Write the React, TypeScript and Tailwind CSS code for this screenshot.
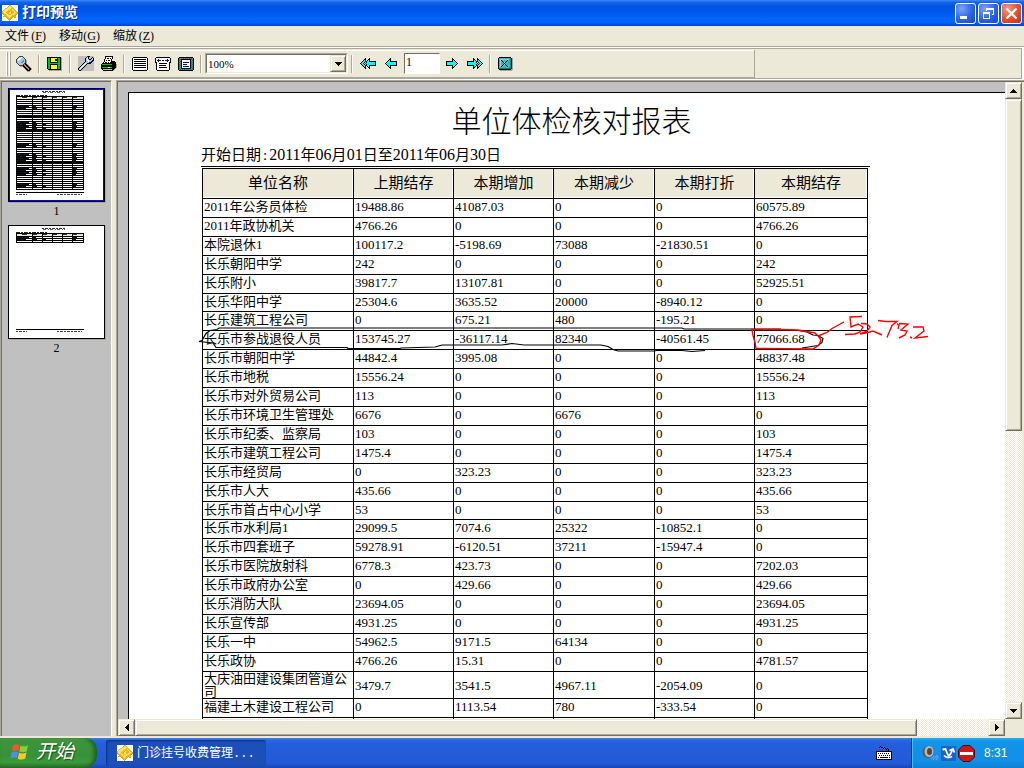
import type { ReactNode } from "react";

const PALETTE: Record<string, string> = {
  K: "#000000",
  C: "#00ffff",
  W: "#ffffff",
  G: "#808080",
  L: "#c0c0c0",
  D: "#404040",
  B: "#0000c0",
  S: "#a8c8e8",
  N: "#00c800",
  Y: "#ffff00",
  T: "#008080",
  A: "#20c0c0",
  R: "#c07848",
  O: "#f0b818",
  P: "#fce468",
  Q: "#d8a020",
  E: "#a8a494",
};

const mirror = (rows: string[]) => rows.map((r) => r.split("").reverse().join(""));

function Bitmap({ rows }: { rows: string[] }) {
  const width = Math.max(...rows.map((r) => r.length));
  const cells: ReactNode[] = [];
  rows.forEach((row, y) => {
    let x = 0;
    while (x < row.length) {
      const c = row[x];
      let n = 1;
      while (row[x + n] === c) n++;
      if (PALETTE[c]) {
        cells.push(<rect key={`${x}-${y}`} x={x} y={y} width={n} height={1} fill={PALETTE[c]} />);
      }
      x += n;
    }
  });
  return (
    <svg width={width} height={rows.length} viewBox={`0 0 ${width} ${rows.length}`} shapeRendering="crispEdges" aria-hidden="true" className="shrink-0">
      {cells}
    </svg>
  );
}

const PREV = [
  ".....K......",
  "....KK......",
  "...KCK......",
  "..KCCKKKKKKK",
  ".KCCCCCCCCCK",
  "KCCCCCCCCCCK",
  ".KCCCCCCCCCK",
  "..KCCKKKKKKK",
  "...KCK......",
  "....KK......",
  ".....K......",
];
const FIRST = [
  ".....K...K......",
  "....KK..KK......",
  "...KCK.KCK......",
  "..KCCKKCCKKKKKKK",
  ".KCCKCKCCCCCCCCK",
  "KCCKCKCCCCCCCCCK",
  ".KCCKCKCCCCCCCCK",
  "..KCCKKCCKKKKKKK",
  "...KCK.KCK......",
  "....KK..KK......",
  ".....K...K......",
];
const FIND = [
  "...DDDD.........",
  "..DSSWSD........",
  ".DSWWSSSD.......",
  "DSWWSSSSSD......",
  "DSWSSSSGSDE.....",
  "DSSSSSGGSDE.....",
  "DSSSSGGSSDE.....",
  ".DSSSSSSDKE.....",
  "..DSSSSDRKKE....",
  "...DDDDKRRKKE...",
  "....EEEKKRRKKE..",
  ".......EKKRRKKE.",
  "........EKKRRKKE",
  ".........EKKRKKE",
  "..........EKKKE.",
  "...........EEE..",
];
const SAVE = [
  "KKKKKKKKKKKKKK.",
  "KNNKYYYYYYKNNKE",
  "KNNKYYYYKKKNNKE",
  "KNNKYYYYKKKNNKE",
  "KNNKYYYYYYKNNKE",
  "KNNKKKKKKKKNNKE",
  "KNNNNNNNNNNNNKE",
  "KNNKKKKKKKKNNKE",
  "KNNKYYYYYYKNNKE",
  "KNNKYYYYYYKNNKE",
  "KNNKYYYYYYKNNKE",
  "KNNKYYYYYYKNNKE",
  ".KKKKKKKKKKKKKE",
  "..EEEEEEEEEEEEE",
];
const WRENCH = [
  "LLLLLLLLLDKKLLLL",
  "LLLLLLLLDSKLLLKL",
  "LLLLLLLKSWKLLKSK",
  "LLLLLLLKSWSKKSSK",
  "LLLLLLLKSWWSSSBK",
  "LLLLLLLKSSWSSBKL",
  "LLLLLLKSSSSBBKLL",
  "LLLLLKSWSKKKKLLL",
  "LLLLKSWSKELLLLLL",
  "LLLKSWSKELLLLLLL",
  "LLKSWSKELLLLLLLL",
  "LKSWSKELLLLLLLLL",
  "KSWSKELLLLLLLLLL",
  "KSSKELLLLLLLLLLL",
  "LKKELLLLLLLLLLLL",
];
const PRINTER = [
  "....KKKKKKKK....",
  "....KWWWWWWK....",
  "....KWKKWKWK....",
  "...KWWWWWWK.....",
  "...KWKWKKWK.....",
  "...KWWWWWWKKKK..",
  "..KWKKWKWKKKKKK.",
  ".KKKKKKKKKKKKKK.",
  "KNNNNNNNNNNKKKKE",
  "KKKKKKKKKKKKKKKE",
  "KKKKKKKKKKKKKKKE",
  "KNNNNNNYYNNKKKKE",
  "KKKKKKKKKKKKKKE.",
  ".KLLLLLLLLLKKE..",
  "..KKKKKKKKKKE...",
];
const LINES = [
  ".KKKKKKKKKKKKKK.",
  "KWWWWWWWWWWWWWWK",
  "KWKKKKKKKKKKKKWK",
  "KWWWWWWWWWWWWWWK",
  "KWKKKKKKKKKKKKWK",
  "KWWWWWWWWWWWWWWK",
  "KWKKKKKKKKKKKKWK",
  "KWWWWWWWWWWWWWWK",
  "KWKKKKKKKKKKKKWK",
  "KWWWWWWWWWWWWWWK",
  "KWKKKKKKKKKKKKWK",
  "KWWWWWWWWWWWWWWK",
  "KWWWWWWWWWWWWWWK",
  ".KKKKKKKKKKKKKK.",
];
const FITWIDTH = [
  ".KKKKKKKKKKKKKK.",
  "KWWWWWWWWWWWWWWK",
  "KWWBWWWWWWWWBWWK",
  "KWBBBBWKKWBBBBWK",
  "KWWBWWWWWWWWBWWK",
  "KKWWWWWWWWWWWWKK",
  ".KWWKKKKKKKKWWK.",
  ".KWWWWWWWWWWWWK.",
  ".KWWKKKKKKKWWWK.",
  ".KWWWWWWWWWWWWK.",
  ".KWWKKKKKKKKWWK.",
  ".KWWWWWWWWWWWWK.",
  ".KWWWWWWWWWWWWK.",
  "..KKKKKKKKKKKK..",
];
const FITPAGE = [
  ".KKKKKKKKKKKKKK.",
  "KTGTGTGTGTGTGTGK",
  "KGTKKKKKKKKKKTGK",
  "KTGKWWWWWWWWKGTK",
  "KGTKWWWWWWWWKTGK",
  "KTGKWBBBBBBWKGTK",
  "KGTKWWWWWWWWKTGK",
  "KTGKWBBBBWWWKGTK",
  "KGTKWWWWWWWWKTGK",
  "KTGKWBBBBBBWKGTK",
  "KGTKWWWWWWWWKTGK",
  "KTGKKKKKKKKKKGTK",
  "KGTGTGTGTGTGTGTK",
  ".KKKKKKKKKKKKKK.",
];
const CLOSE = [
  ".KKKKKKKKKKKK..",
  "KAAAAAAAAAAATKE",
  "KASSSSSSSSSATKE",
  "KASKAAAAAKAATKE",
  "KASAKAAAKAAATKE",
  "KASAAKSKAAAATKE",
  "KASAAAKAAAAATKE",
  "KASAAKSKAAAATKE",
  "KASAKAAAKAAATKE",
  "KASKAAAAAKAATKE",
  "KAAAAAAAAAAATKE",
  "KTTTTTTTTTTTTKE",
  ".KKKKKKKKKKKKEE",
  "..EEEEEEEEEEEE.",
];
const APP = [
  "WWWWWWWQOWWWWWWW",
  "WWWWWWQPPOWWWWWW",
  "WWWWWOPPPPOWWWWW",
  "WWWOOPPPPOOOWWWW",
  "WWOPPPPPOOPOOWWW",
  "WOPPPPOOOOOPOOWW",
  "OPPPPOOQPOOOPOOW",
  "OPPPOOQPPQOOPPOQ",
  "QOPPPOOPPOOPPOOQ",
  "WQOOPPOOOPPPOOQW",
  "WWOOOPPPPPOOOQWW",
  "WQOQOOPPPOOQOOWW",
  "WWWWQOOPOOQWQQWW",
  "WWWWWQOOOQWWWWWW",
  "WWWWWWQOQWWWWWWW",
  "WWWWWWWQWWWWWWWW",
];
const KEYBOARD = [
  "....K...........",
  "...K.KK.K.......",
  ".......K.K.K....",
  "..........K.K...",
  "............K...",
  "KKKKKKKKKKKKKKKK",
  "KWWWWWWWWWWWWWWK",
  "KWKWKWKWKWKWKWWK",
  "KWWWWWWWWWWWWWWK",
  "KWWKWKWKWKWKWKWK",
  "KWWWWWWWWWWWWWWK",
  "KWKWKKKKKKKKWKWK",
  "KWWWWWWWWWWWWWWK",
  "KKKKKKKKKKKKKKKK",
];

const HEADERS = ["单位名称", "上期结存", "本期增加", "本期减少", "本期打折", "本期结存"];

const ROWS: string[][] = [
  ["2011年公务员体检", "19488.86", "41087.03", "0", "0", "60575.89"],
  ["2011年政协机关", "4766.26", "0", "0", "0", "4766.26"],
  ["本院退休1", "100117.2", "-5198.69", "73088", "-21830.51", "0"],
  ["长乐朝阳中学", "242", "0", "0", "0", "242"],
  ["长乐附小", "39817.7", "13107.81", "0", "0", "52925.51"],
  ["长乐华阳中学", "25304.6", "3635.52", "20000", "-8940.12", "0"],
  ["长乐建筑工程公司", "0", "675.21", "480", "-195.21", "0"],
  ["长乐市参战退役人员", "153745.27", "-36117.14", "82340", "-40561.45", "77066.68"],
  ["长乐市朝阳中学", "44842.4", "3995.08", "0", "0", "48837.48"],
  ["长乐市地税", "15556.24", "0", "0", "0", "15556.24"],
  ["长乐市对外贸易公司", "113", "0", "0", "0", "113"],
  ["长乐市环境卫生管理处", "6676", "0", "6676", "0", "0"],
  ["长乐市纪委、监察局", "103", "0", "0", "0", "103"],
  ["长乐市建筑工程公司", "1475.4", "0", "0", "0", "1475.4"],
  ["长乐市经贸局", "0", "323.23", "0", "0", "323.23"],
  ["长乐市人大", "435.66", "0", "0", "0", "435.66"],
  ["长乐市首占中心小学", "53", "0", "0", "0", "53"],
  ["长乐市水利局1", "29099.5", "7074.6", "25322", "-10852.1", "0"],
  ["长乐市四套班子", "59278.91", "-6120.51", "37211", "-15947.4", "0"],
  ["长乐市医院放射科", "6778.3", "423.73", "0", "0", "7202.03"],
  ["长乐市政府办公室", "0", "429.66", "0", "0", "429.66"],
  ["长乐消防大队", "23694.05", "0", "0", "0", "23694.05"],
  ["长乐宣传部", "4931.25", "0", "0", "0", "4931.25"],
  ["长乐一中", "54962.5", "9171.5", "64134", "0", "0"],
  ["长乐政协", "4766.26", "15.31", "0", "0", "4781.57"],
  ["大庆油田建设集团管道公司", "3479.7", "3541.5", "4967.11", "-2054.09", "0"],
  ["福建土木建设工程公司", "0", "1113.54", "780", "-333.54", "0"],
  ["", "", "", "", "", ""],
];

function rowClass(index: number) {
  if (index === 5 || index === 16) return "h-[18px] pb-px leading-4";
  if (index === 25) return "h-[27px] leading-[13px]";
  return "h-[19px] pb-0.5 leading-4";
}

function Separator() {
  return (
    <span className="flex w-2 shrink-0 justify-center">
      <span className="h-[18px] w-0.5 border-l border-[#aca899] bg-white" />
    </span>
  );
}

function Tool({ label, rows }: { label: string; rows: string[] }) {
  return (
    <button type="button" aria-label={label} className="flex h-[22px] w-[23px] shrink-0 items-center justify-center">
      <Bitmap rows={rows} />
    </button>
  );
}

function Arrow({ dir }: { dir: "up" | "down" | "left" | "right" }) {
  const shapes = {
    up: ["...K...", "..KKK..", ".KKKKK.", "KKKKKKK"],
    down: ["KKKKKKK", ".KKKKK.", "..KKK..", "...K..."],
    left: ["...K", "..KK", ".KKK", "KKKK", ".KKK", "..KK", "...K"],
    right: ["K...", "KK..", "KKK.", "KKKK", "KKK.", "KK..", "K..."],
  };
  return <Bitmap rows={shapes[dir]} />;
}

const RAISED =
  "border border-t-[#ece9d8] border-l-[#ece9d8] border-r-[#716f64] border-b-[#716f64] bg-[#ece9d8] shadow-[inset_1px_1px_0_#fff,inset_-1px_-1px_0_#aca899]";
const TRACK = "bg-[repeating-conic-gradient(#ffffff_0_25%,#ece9d8_0_50%)] bg-[length:2px_2px]";

function ScrollButton({ dir }: { dir: "up" | "down" | "left" | "right" }) {
  return (
    <button type="button" aria-label={`Scroll ${dir}`} className={`flex size-[17px] shrink-0 items-center justify-center ${RAISED}`}>
      <Arrow dir={dir} />
    </button>
  );
}

function TitleBar() {
  const base = "flex size-[21px] items-center justify-center rounded-[3px] border border-white";
  const blue = "bg-[radial-gradient(circle_at_30%_25%,#7ba3f5,#2b62e8_55%,#1a47c4)]";
  return (
    <header className="flex h-[26px] shrink-0 items-center bg-[linear-gradient(#3c8cf8_0,#1665ec_8%,#0353e1_25%,#0058ee_50%,#0066ff_75%,#0062f8_88%,#003dd0_100%)] pr-0.5 pl-0.5">
      <Bitmap rows={APP} />
      <h1 className="ml-1 flex-1 text-sm leading-5 font-bold text-white [text-shadow:1px_1px_0_#0a2a88]">打印预览</h1>
      <div className="flex gap-0.5">
        <button type="button" aria-label="最小化" className={`${base} ${blue}`}>
          <svg width="13" height="13" viewBox="0 0 13 13" shapeRendering="crispEdges">
            <path d="M1 9h7v3H1z" fill="#fff" />
          </svg>
        </button>
        <button type="button" aria-label="还原" className={`${base} ${blue}`}>
          <svg width="13" height="13" viewBox="0 0 13 13" shapeRendering="crispEdges">
            <path d="M4 1h8v7h-2V7h1V3H5v1H4zM1 5h7v7H1zm1 2v4h5V7z" fill="#fff" fillRule="evenodd" />
          </svg>
        </button>
        <button type="button" aria-label="关闭" className={`${base} bg-[radial-gradient(circle_at_30%_25%,#f09a80,#e0502c_55%,#b83010)]`}>
          <svg width="13" height="13" viewBox="0 0 13 13">
            <path d="M1.500 1.500l10 10M11.500 1.500l-10 10" stroke="#fff" strokeWidth="2.200" />
          </svg>
        </button>
      </div>
    </header>
  );
}

function MenuBar() {
  const items = [
    ["文件", "F"],
    ["移动", "G"],
    ["缩放", "Z"],
  ];
  return (
    <nav className="flex h-5 shrink-0 items-center gap-[13px] pl-[5px] text-xs">
      {items.map(([name, key]) => (
        <button key={key} type="button" className="flex w-[41px] justify-between leading-4">
          <span>{name}</span>
          <span>
            (<u className="underline-offset-2">{key}</u>)
          </span>
        </button>
      ))}
    </nav>
  );
}

function ToolBar() {
  return (
    <div className="h-[34px] shrink-0 border-t border-[#aca899] bg-white pt-px">
      <div className="mr-0.5 flex h-[31px] border-y border-r border-[#aca899] bg-[#ece9d8] pt-px">
        <div className="flex w-[755px] items-center border-r border-b border-[#aca899] pl-1.5 shadow-[inset_0_1px_0_#fff]">
          <span className="flex w-1.5 gap-px">
            <span className="h-6 w-0.5 border-l border-white bg-[#aca899]" />
            <span className="h-6 w-0.5 border-l border-white bg-[#aca899]" />
          </span>
          <Tool label="查找" rows={FIND} />
          <Separator />
          <Tool label="保存" rows={SAVE} />
          <Separator />
          <Tool label="打印设置" rows={WRENCH} />
          <Tool label="打印" rows={PRINTER} />
          <Separator />
          <Tool label="实际大小" rows={LINES} />
          <Tool label="适合宽度" rows={FITWIDTH} />
          <Tool label="整页" rows={FITPAGE} />
          <Separator />
          <div className="relative h-[21px] w-[143px] shrink-0 border border-t-[#aca899] border-r-white border-b-white border-l-[#aca899]">
            <select
              aria-label="缩放比例"
              defaultValue="100%"
              className="block h-full w-full appearance-none border border-t-[#716f64] border-r-[#ece9d8] border-b-[#ece9d8] border-l-[#716f64] bg-white pl-px text-[11px] leading-4"
            >
              <option>100%</option>
              <option>75%</option>
              <option>50%</option>
            </select>
            <span className={`pointer-events-none absolute top-px right-px flex h-[17px] w-4 items-center justify-center ${RAISED}`}>
              <Arrow dir="down" />
            </span>
          </div>
          <Separator />
          <Tool label="首页" rows={FIRST} />
          <Tool label="上一页" rows={PREV} />
          <input
            aria-label="页码"
            defaultValue="1"
            className="ml-0.5 h-[21px] w-9 shrink-0 border border-t-[#716f64] border-r-white border-b-white border-l-[#716f64] bg-white px-px pb-0.5 text-xs leading-4"
          />
          <Tool label="下一页" rows={mirror(PREV)} />
          <Tool label="末页" rows={mirror(FIRST)} />
          <Separator />
          <Tool label="关闭预览" rows={CLOSE} />
        </div>
      </div>
    </div>
  );
}

function Thumbnail({ page, lines, blocks, selected }: { page: number; lines: number; blocks: number[]; selected?: boolean }) {
  const columns = [8, 24, 34, 44, 54, 64, 75];
  const bottom = 11 + lines * 2;
  const rows = Array.from({ length: lines }, (_, i) => i);
  return (
    <button type="button" className="flex w-[97px] flex-col items-center">
      <svg width="97" height="114" viewBox="0 0 97 114" shapeRendering="crispEdges" className="shadow-[1px_1px_0_#aca899]" aria-hidden="true">
        <rect width="97" height="114" fill="#000" />
        {selected && <rect x="1" y="1" width="95" height="112" fill="#0000ff" />}
        <rect x={selected ? 2 : 1} y={selected ? 2 : 1} width={selected ? 93 : 95} height={selected ? 110 : 112} fill="#fff" />
        <path d="M34 3.500h24" stroke="#334" strokeDasharray="2 1 3 1" />
        <path d="M35 4.500h22" stroke="#667" strokeDasharray="3 2 1 1" />
        <path d="M8 7.500h31" stroke="#222" strokeDasharray="4 1 2 1" />
        <path d="M8 8.500h68" stroke="#000" />
        <path d="M9 10h66" stroke="#ece9d8" strokeWidth="2" />
        <path d="M14 9.500h60" stroke="#332" strokeDasharray="5 5" />
        <path d="M8 11.500h68" stroke="#000" />
        {rows.map((i) => (
          <path key={i} d={`M8 ${13.5 + i * 2}h68`} stroke="#000" />
        ))}
        {selected && <path d="M8 28.500h68M8 42.500h68M8 74.500h68M8 104.500h68" stroke="#000" />}
        {columns.map((x) => (
          <path key={x} d={`M${x + 0.5} 8V${bottom + 1}`} stroke="#000" />
        ))}
        {blocks.map((y) => (
          <g key={y} stroke="#10131c">
            <path d={`M9 ${y + 0.5}h12M25 ${y + 0.5}h3M65 ${y + 0.5}h4`} />
            <path d={`M9 ${y + 2.5}h9M25 ${y + 2.5}h4M35 ${y + 2.5}h3M65 ${y + 2.5}h3`} />
          </g>
        ))}
        {!selected && <path d="M8 104.500h68" stroke="#000" />}
        <path d="M8 106.500h11M49 106.500h25" stroke="#443" strokeDasharray="2 1 3 1" />
      </svg>
      <span className="mt-px text-xs leading-4">{page}</span>
    </button>
  );
}

function Annotation() {
  return (
    <svg className="pointer-events-none absolute top-[207px] left-[61px]" width="745" height="60" viewBox="190 300 745 60" fill="none" strokeWidth="1.200" aria-hidden="true">
      <g stroke="#000">
        <path d="M199 341.500l3-1 4-7 4-3 7-1 2-1.500h463l2 1h97" />
        <path d="M199 341.500l14 1.500 3 4.500h131l1 1h52l1-.5 34-1 7-2h60l10-1.500 12 1.500h77l7 1.500 5 3 5 1.500h36l3-.5h25l10 1 13-1" />
        <path d="M798 330.500l9 1.500 6 3 5 .5 5 3-1 4-4 3-16 2.500" />
      </g>
      <g stroke="#f00" strokeWidth="1.400">
        <path d="M752 329.500l1 6 2 7 1 6 57 .5 6-4 2-5-2-3-4-4-17-3-18-.5z" />
        <path d="M818 336l9-3.500 5-4 12-6.500" />
        <path d="M862 316.500l-12 .5 1 10 7-3 5 3-3 5-5 2-10 .5" />
        <path d="M861 323.500l6 .5 3 3-3 4-7 3 8-1.500 5-1.500 9 4" />
        <path d="M878 320.500l8 1h11l-5 4-5 12" />
        <path d="M897 324l2 1-1 4M899 323.500l9 .5-7 6 6 1-2 4-6 3M910 337l2 1" />
        <path d="M913 327h10l1 4-9 7 13-1.500" />
      </g>
    </svg>
  );
}

const Num = ({ children }: { children: ReactNode }) => <span className="text-base leading-4">{children}</span>;

function Report() {
  return (
    <article className="relative w-[886px] shrink-0 border-t border-l border-black bg-white pt-[14px]">
      <h2 className="text-center text-[30px] leading-[30px] font-light">单位体检核对报表</h2>
      <div className="ml-[72px] w-[669px]">
        <p className="mt-2.5 h-[19px] text-[15px] leading-4 whitespace-nowrap">
          开始日期<span className="px-0.5">:</span>
          <Num>2011</Num>年<Num>06</Num>月<Num>01</Num>日至<Num>2011</Num>年<Num>06</Num>月<Num>30</Num>日
        </p>
        <div className="border-t border-black pt-px pl-px">
          <table className="w-[666px] table-fixed border-separate border-spacing-0 border-t border-l border-black">
            <colgroup>
              <col className="w-[151px]" />
              <col className="w-[100px]" />
              <col className="w-[100px]" />
              <col className="w-[101px]" />
              <col className="w-[100px]" />
              <col />
            </colgroup>
            <thead>
              <tr>
                {HEADERS.map((h, i) => (
                  <th key={i} scope="col" className="h-[30px] border-r border-b border-black bg-[#ece9d8] p-0 pb-px text-[15px] leading-5 font-normal shadow-[inset_-1px_-1px_0_#fff]">
                    {h}
                  </th>
                ))}
              </tr>
            </thead>
            <tbody>
              {ROWS.map((row, r) => (
                <tr key={r}>
                  {row.map((cell, c) => (
                    <td key={c} className={`border-r border-b border-black pt-0 pr-0 pl-px text-[13px] ${rowClass(r)}`}>
                      {cell}
                    </td>
                  ))}
                </tr>
              ))}
            </tbody>
          </table>
        </div>
      </div>
      <Annotation />
    </article>
  );
}

function TaskBar() {
  return (
    <footer className="flex h-[30px] shrink-0 items-stretch bg-[linear-gradient(#3a80f0_0,#2b66e0_8%,#245edb_20%,#2259d6_85%,#1a45b0_100%)] text-white">
      <button
        type="button"
        className="flex w-[97px] shrink-0 items-center gap-1.5 rounded-r-xl bg-[linear-gradient(#5fb45c_0,#3c963c_12%,#389138_60%,#3b9b3b_80%,#2a732a_100%)] pb-0.5 pl-2.5 shadow-[inset_-3px_0_4px_#1e5c1e]"
      >
        <svg width="20" height="18" viewBox="0 0 20 18" aria-hidden="true">
          <path d="M3 2.500C5.500.8 7.500 1 9.500 2L8.300 8C6.200 7 4.200 7 1.800 8.300z" fill="#ef5a28" />
          <path d="M10.500 2.500C12.500 3.600 15 3.800 18 2.200L16.800 8.300C14.200 9.800 11.500 9.500 9.300 8.500z" fill="#8ccc3c" />
          <path d="M1.500 9.500C4 8.200 6 8.200 8 9.200L6.800 15.200C4.800 14.200 2.600 14.200.3 15.500z" fill="#4a8cf0" />
          <path d="M9 9.700C11.200 10.700 13.800 11 16.500 9.500L15.300 15.500C12.800 17 10 16.800 7.800 15.700z" fill="#fcc820" />
        </svg>
        <span className="text-[19px] leading-6 italic [text-shadow:1px_1px_1px_#1c4c1c]">开始</span>
      </button>
      <div className="flex flex-1 items-center pl-[9px]">
        <button
          type="button"
          className="flex h-[26px] w-[160px] items-center gap-1 rounded-[3px] bg-[#1c4fb8] pl-[11px] text-left text-xs leading-4 shadow-[inset_1px_1px_2px_#0c3080]"
        >
          <Bitmap rows={APP} />
          <span className="whitespace-nowrap">
            门诊挂号收费管理<span className="[font-family:'Liberation_Mono',monospace]">...</span>
          </span>
        </button>
      </div>
      <span className="mr-[19px] flex items-center">
        <Bitmap rows={KEYBOARD} />
      </span>
      <div className="flex w-[113px] shrink-0 items-center border-l border-[#0a2c88] bg-[linear-gradient(#1cb0f4_0,#1393ea_12%,#128fe8_75%,#1180d0_100%)] pl-2.5 shadow-[inset_1px_0_0_#3cc4fa]">
        <svg width="17" height="16" viewBox="0 0 17 16" aria-hidden="true">
          <ellipse cx="6" cy="7" rx="5.500" ry="6" fill="#585858" />
          <ellipse cx="7" cy="6.500" rx="4.500" ry="5.500" fill="#b8b8b0" />
          <ellipse cx="7.500" cy="6.500" rx="2.500" ry="3.500" fill="#484848" />
          <path d="M9 14l3-3M11 15l4-5M14 15l2-4" stroke="#90a0f0" />
        </svg>
        <svg className="ml-0.5" width="15" height="15" viewBox="0 0 15 15" aria-hidden="true">
          <rect width="15" height="15" fill="#1c62c8" />
          <path d="M1.500 3.500l3-.5 2 5q1 3 3 0l2-4.500M8.500 4.500l3.500-1.500 1.500 3.500M3 9.500q3 3.500 8 1" stroke="#fff" strokeWidth="1.800" fill="none" />
        </svg>
        <svg className="ml-0.5" width="17" height="17" viewBox="0 0 17 17" aria-hidden="true">
          <path d="M5 .5h7L16.500 5v7L12 16.500H5L.5 12V5z" fill="#c81818" stroke="#4c0808" />
          <path d="M2 7h13v3H2z" fill="#fff" />
        </svg>
        <time className="ml-[9px] [font-family:'Liberation_Sans',sans-serif] text-xs leading-4">8:31</time>
      </div>
    </footer>
  );
}

export default function App() {
  return (
    <div className="flex h-screen flex-col overflow-hidden bg-[#ece9d8] [font-family:'Liberation_Serif','Noto_Sans_CJK_SC',serif] text-black">
      <TitleBar />
      <MenuBar />
      <ToolBar />
      <main className="flex min-h-0 flex-1 pb-0.5">
        <aside className="flex w-[112px] shrink-0 flex-col items-start gap-1.5 border-t border-r border-l border-t-[#aca899] border-r-white border-l-[#aca899] bg-[#c0c0c0] pt-[7px] pl-[7px] shadow-[inset_1px_1px_0_#716f64]">
          <Thumbnail page={1} lines={45} blocks={[18, 23, 34, 38, 51, 56, 66, 70, 80, 84, 96]} selected />
          <Thumbnail page={2} lines={3} blocks={[12]} />
        </aside>
        <div className="ml-1 flex min-w-0 flex-1 flex-col border-t border-l border-[#aca899] pt-px pr-0.5 pl-px shadow-[inset_1px_1px_0_#716f64]">
          <div className="flex min-h-0 flex-1">
            <div className="flex min-w-0 flex-1 items-start overflow-hidden bg-[#c0c0c0] pt-2.5 pl-2.5">
              <Report />
            </div>
            <div className={`flex w-[17px] shrink-0 flex-col ${TRACK}`}>
              <ScrollButton dir="up" />
              <div className="flex flex-1 flex-col">
                <div className={`h-[55%] ${RAISED}`} />
              </div>
              <ScrollButton dir="down" />
            </div>
          </div>
          <div className="flex shrink-0">
            <div className={`flex flex-1 ${TRACK}`}>
              <ScrollButton dir="left" />
              <div className="flex flex-1">
                <div className={`w-11/12 ${RAISED}`} />
              </div>
              <ScrollButton dir="right" />
            </div>
            <div className="w-[17px] shrink-0" />
          </div>
        </div>
      </main>
      <TaskBar />
    </div>
  );
}
